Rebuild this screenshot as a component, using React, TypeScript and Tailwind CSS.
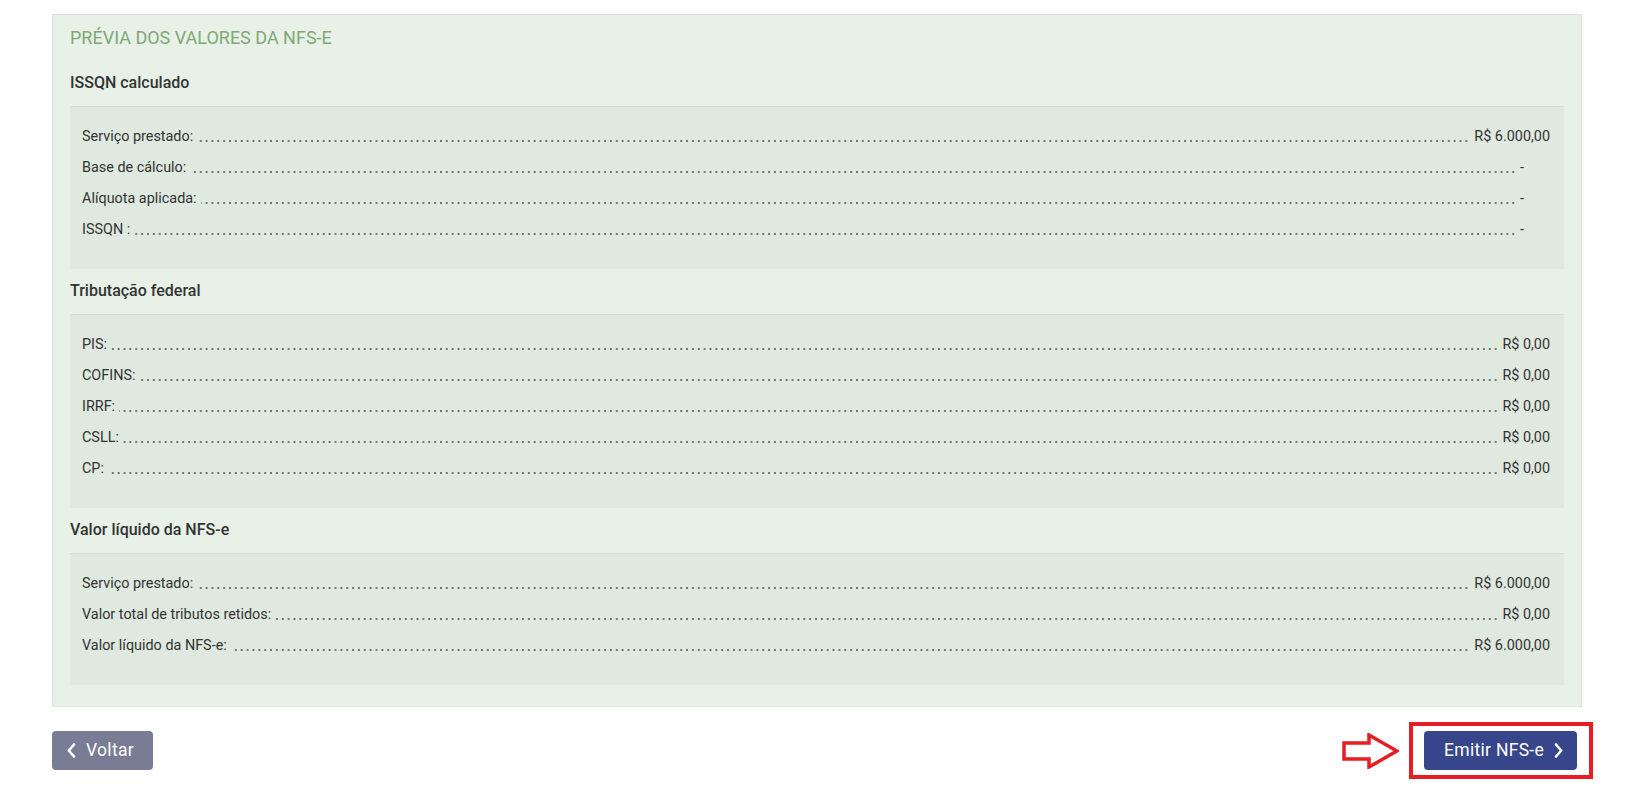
import { ReactNode } from "react";

type Row = { label: string; value: string };

const issqn: Row[] = [
  { label: "Serviço prestado:", value: "R$ 6.000,00" },
  { label: "Base de cálculo:", value: "-" },
  { label: "Alíquota aplicada:", value: "-" },
  { label: "ISSQN :", value: "-" },
];

const federal: Row[] = [
  { label: "PIS:", value: "R$ 0,00" },
  { label: "COFINS:", value: "R$ 0,00" },
  { label: "IRRF:", value: "R$ 0,00" },
  { label: "CSLL:", value: "R$ 0,00" },
  { label: "CP:", value: "R$ 0,00" },
];

const liquido: Row[] = [
  { label: "Serviço prestado:", value: "R$ 6.000,00" },
  { label: "Valor total de tributos retidos:", value: "R$ 0,00" },
  { label: "Valor líquido da NFS-e:", value: "R$ 6.000,00" },
];

function Heading({ children, first }: { children: ReactNode; first?: boolean }) {
  return (
    <h3
      className={`${first ? "mt-[20px]" : "mt-[10px]"} mb-[11px] text-[16px] font-medium leading-[24px] text-[#333333]`}
    >
      {children}
    </h3>
  );
}

// dotted leader drawn as the row background; label and value mask it with the box colour
function Leaders({ rows }: { rows: Row[] }) {
  return (
    <div className="border-t border-[#cfe0cf] bg-[#dfe9df] pb-[24px] pl-[12px] pr-[14px] pt-[14px]">
      {rows.map((row) => (
        <div
          key={row.label}
          className="flex h-[31px] items-start justify-between bg-[radial-gradient(circle,#3a3a3a_0.55px,transparent_1px)] bg-[length:5.86px_4px] bg-[position:-1.4px_17.5px] bg-repeat-x text-[14.4px] leading-[31px] text-[#333333]"
        >
          <span className="whitespace-nowrap bg-[#dfe9df] pr-[4px]">{row.label}</span>
          <span
            className={`whitespace-nowrap bg-[#dfe9df] pl-[4px] ${row.value === "-" ? "pr-[26px]" : ""}`}
          >
            {row.value}
          </span>
        </div>
      ))}
    </div>
  );
}

export default function App() {
  return (
    <div className="min-h-screen bg-white font-['Roboto',_'Liberation_Sans',_sans-serif]">
      <div className="ml-[52px] w-[1530px] pt-[14px]">
        <section className="border border-[#dbe4db] bg-[#e7f1e7] px-[17px] pb-[21px] pt-[9px]">
          <h2 className="text-[18px] leading-[27px] text-[#80a874]">PRÉVIA DOS VALORES DA NFS-E</h2>

          <Heading first>ISSQN calculado</Heading>
          <Leaders rows={issqn} />

          <Heading>Tributação federal</Heading>
          <Leaders rows={federal} />

          <Heading>Valor líquido da NFS-e</Heading>
          <Leaders rows={liquido} />
        </section>

        <div className="mt-[15px] flex items-center justify-between">
          <button
            type="button"
            className="flex h-[39px] w-[101px] items-center gap-[10px] rounded-[4px] bg-[#797c95] pl-[15px] text-[17.5px] tracking-[0.3px] text-white"
          >
            <svg width="9" height="15" viewBox="0 0 9 15" fill="none">
              <polyline points="7,1.5 1.8,7.5 7,13.5" stroke="white" strokeWidth="2.6" strokeLinecap="round" strokeLinejoin="round" />
            </svg>
            Voltar
          </button>

          <div className="mr-[-11px] flex items-center gap-[10px]">
            <svg width="57" height="36" viewBox="0 0 57 36" fill="none">
              <polygon
                points="2,10 27,10 27,2 55,18 27,34 27,26 2,26"
                fill="white"
                stroke="#e81c24"
                strokeWidth="3.5"
                strokeLinejoin="miter"
              />
            </svg>
            <div className="border-4 border-[#e81c24] pb-[5px] pl-[11px] pr-[12px] pt-[5px]">
              <button
                type="button"
                className="flex h-[39px] w-[153px] items-center gap-[10px] rounded-[4px] bg-[#37458a] pl-[20px] text-[17.5px] tracking-[0.3px] text-white"
              >
                Emitir NFS-e
                <svg width="9" height="15" viewBox="0 0 9 15" fill="none">
                  <polyline points="2,1.5 7.2,7.5 2,13.5" stroke="white" strokeWidth="2.6" strokeLinecap="round" strokeLinejoin="round" />
                </svg>
              </button>
            </div>
          </div>
        </div>
      </div>
    </div>
  );
}
